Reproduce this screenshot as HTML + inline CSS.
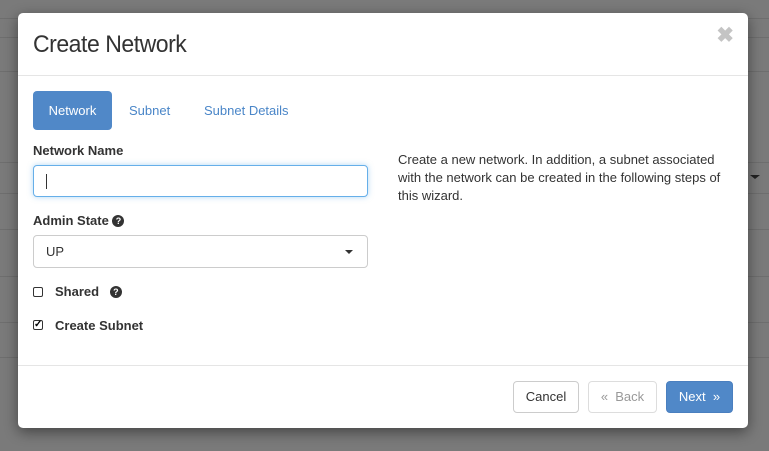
<!DOCTYPE html>
<html><head><style>
*{box-sizing:border-box}
body{margin:0;width:769px;height:451px;background:#7a7a7a;font-family:"Liberation Sans",sans-serif;position:relative;overflow:hidden}
.l{position:absolute;left:0;right:0;height:1px;background:#6e6e6e}
.m{position:absolute;left:18px;top:13px;width:730px;height:415px;background:#fff;border-radius:5px;box-shadow:0 4px 14px rgba(0,0,0,.45)}
.a{position:absolute}
h1{position:absolute;left:15px;top:18px;margin:0;font-size:24px;font-weight:normal;color:#333;letter-spacing:-0.5px;transform:scaleX(0.96);transform-origin:left}
.x{position:absolute;right:14px;top:10px;font-size:21px;font-weight:bold;color:#c4c4c4}
.tab{position:absolute;top:78px;height:39px;line-height:39px;font-size:13px;color:#4a86c8;padding:0 16px}
.lbl{font-size:13px;font-weight:bold;color:#333}
.inp{position:absolute;left:15px;width:335px;border:1px solid #ccc;border-radius:4px;background:#fff}
.q{display:inline-block;width:12px;height:12px;border-radius:50%;background:#333;color:#fff;font-size:9px;line-height:12px;text-align:center;position:relative;top:-1px;vertical-align:middle}
.btn{position:absolute;top:368px;height:32px;line-height:30px;font-size:13px;border:1px solid #ccc;border-radius:4px;text-align:center;color:#333}
</style></head><body>
<div class="l" style="top:18px"></div><div class="l" style="top:37px"></div><div class="l" style="top:71px"></div>
<div class="l" style="top:162px"></div><div class="l" style="top:193px"></div><div class="l" style="top:229px"></div>
<div class="l" style="top:276px"></div><div class="l" style="top:322px"></div><div class="l" style="top:357px"></div>
<div class="a" style="left:750px;top:175px;border-left:5px solid transparent;border-right:5px solid transparent;border-top:4px solid #222"></div>
<div class="m">
<h1>Create Network</h1>
<div class="x">✖</div>
<div class="a" style="left:0;right:0;top:62px;height:1px;background:#e5e5e5"></div>
<div class="tab" style="left:15px;width:79px;background:#5088c8;color:#fff;border-radius:4px;text-align:center;padding:0">Network</div>
<div class="tab" style="left:95px">Subnet</div>
<div class="tab" style="left:170px">Subnet Details</div>
<div class="a lbl" style="left:15px;top:130px">Network Name</div>
<div class="inp" style="top:152px;height:32px;border-color:#66afe9;box-shadow:0 0 6px rgba(102,175,233,.5)"><div class="a" style="left:12px;top:8px;width:1px;height:15px;background:#333"></div></div>
<div class="a lbl" style="left:15px;top:200px">Admin State <span class="q">?</span></div>
<div class="inp" style="top:222px;height:33px;font-size:13px;color:#333;padding:8px 12px">UP<div class="a" style="right:14px;top:14px;border-left:4px solid transparent;border-right:4px solid transparent;border-top:4px solid #333"></div></div>
<div class="a" style="left:15px;top:274px;width:10px;height:10px;border:1px solid #333;border-radius:2px"></div>
<div class="a lbl" style="left:37px;top:271px">Shared &nbsp;&nbsp;<span class="q">?</span></div>
<div class="a" style="left:15px;top:307px;width:10px;height:10px;border:1px solid #333;border-radius:2px;font-size:10px;line-height:8px;font-weight:bold">✓</div>
<div class="a lbl" style="left:37px;top:305px">Create Subnet</div>
<div class="a" style="left:380px;top:138px;width:335px;font-size:13px;line-height:18px;color:#333">Create a new network. In addition, a subnet associated with the network can be created in the following steps of this wizard.</div>
<div class="a" style="left:0;right:0;top:352px;height:1px;background:#e5e5e5"></div>
<div class="btn" style="left:495px;width:66px">Cancel</div>
<div class="btn" style="left:570px;width:69px;color:#999;border-color:#ddd">«&nbsp; Back</div>
<div class="btn" style="left:648px;width:67px;background:#5088c8;border-color:#4a7fbf;color:#fff">Next &nbsp;»</div>
</div>
</body></html>
